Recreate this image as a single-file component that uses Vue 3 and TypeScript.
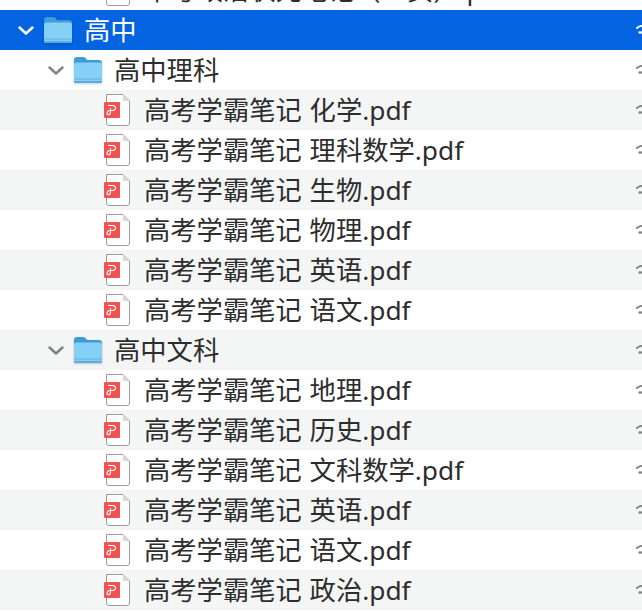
<script setup lang="ts">
interface Row {
  name: string
  depth: 0 | 1 | 2
  kind: 'folder' | 'file'
  selected?: boolean
}
const p = '高考学霸笔记 '
const rows: Row[] = [
  { name: '中考政治状元笔记（一页）.pdf', depth: 2, kind: 'file' },
  { name: '高中', depth: 0, kind: 'folder', selected: true },
  { name: '高中理科', depth: 1, kind: 'folder' },
  ...['化学', '理科数学', '生物', '物理', '英语', '语文'].map((s): Row => ({ name: `${p}${s}.pdf`, depth: 2, kind: 'file' })),
  { name: '高中文科', depth: 1, kind: 'folder' },
  ...['地理', '历史', '文科数学', '英语', '语文', '政治'].map((s): Row => ({ name: `${p}${s}.pdf`, depth: 2, kind: 'file' })),
]
</script>

<template>
  <div class="window">
    <div class="list">
      <div
        v-for="(r, i) in rows"
        :key="i"
        class="row"
        :class="[`depth-${r.depth}`, { selected: r.selected, striped: i % 2 === 1 && !r.selected }]"
      >
        <svg v-if="r.kind === 'folder'" class="chevron" width="16" height="9" viewBox="0 0 16 9">
          <path d="M1.5 1.5 L8 7.5 L14.5 1.5" fill="none" stroke-width="2.4" stroke-linecap="round" stroke-linejoin="round" />
        </svg>

        <svg v-if="r.kind === 'folder'" class="folder" width="30" height="28" viewBox="0 0 30 28">
          <path d="M1 4 Q1 1 4 1 H10 Q12 1 13 2.5 L14 4 H26 Q29 4 29 7 V24 Q29 27 26 27 H4 Q1 27 1 24 Z" fill="#3d9bd6" />
          <path d="M1 8.5 Q1 6.5 3 6.5 H27 Q29 6.5 29 8.5 V24.5 Q29 27 26.5 27 H3.5 Q1 27 1 24.5 Z" fill="#86d0f8" />
          <rect x="1" y="22.5" width="28" height="1.2" fill="#66b8ea" />
          <rect x="1" y="25" width="28" height="2" rx="1" fill="#58acde" />
        </svg>

        <svg v-else class="file" width="28" height="32" viewBox="0 0 28 32">
          <path d="M3.5 0.5 H20 L26.5 7 V29 Q26.5 31.5 24 31.5 H6 Q3.5 31.5 3.5 29 Z" fill="#fff" stroke="#9c9c9c" />
          <path d="M20 0.5 V7 H26.5 Z" fill="#d9d9d9" />
          <rect x="1" y="8" width="16" height="16" rx="1" fill="#ee5350" />
          <path d="M5 11.5 H9.5 Q12.5 11.5 12.5 14 Q12.5 16.5 9.5 16.5 H7 Q4 16.5 4 19.3 Q4 20.8 5.5 20.8 Q7.5 20.8 7.5 18 V14" fill="none" stroke="#fff" stroke-width="1.1" />
        </svg>

        <span class="name">{{ r.name }}</span>

        <svg class="cloud" width="6" height="10" viewBox="0 0 6 10">
          <path d="M0.5 4 L0.5 3.5 Q2 1.2 6 0.8" fill="none" stroke-width="1.8" />
          <path d="M2.5 7.5 H6" fill="none" stroke-width="2.2" />
        </svg>
      </div>
    </div>
  </div>
</template>

<style scoped>
.window {
  width: 642px;
  height: 612px;
  overflow: hidden;
  background: #fff;
}
.list {
  margin-top: -30px;
}
.row {
  height: 40px;
  display: flex;
  align-items: center;
  color: #2d2d2d;
  font-size: 26.3px;
  white-space: nowrap;
}
.striped {
  background: #f4f5f5;
}
.selected {
  background: #0463e1;
  color: #fff;
}
.depth-0 {
  padding-left: 18px;
}
.depth-1 {
  padding-left: 48px;
}
.depth-2 {
  padding-left: 103px;
}
.chevron {
  flex: none;
  margin-right: 9px;
  stroke: #808080;
}
.folder {
  flex: none;
  margin-right: 11px;
  filter: drop-shadow(0 1px 1px rgba(0, 0, 0, 0.2));
}
.file {
  flex: none;
  margin-right: 13px;
}
.name {
  font-family: "Noto Sans", "Noto Sans CJK SC", sans-serif;
  flex: 1 1 auto;
  word-spacing: 1px;
  padding-bottom: 4px;
}
.cloud {
  flex: none;
  stroke: #808080;
}
.selected .chevron,
.selected .cloud {
  stroke: #fff;
}
</style>
